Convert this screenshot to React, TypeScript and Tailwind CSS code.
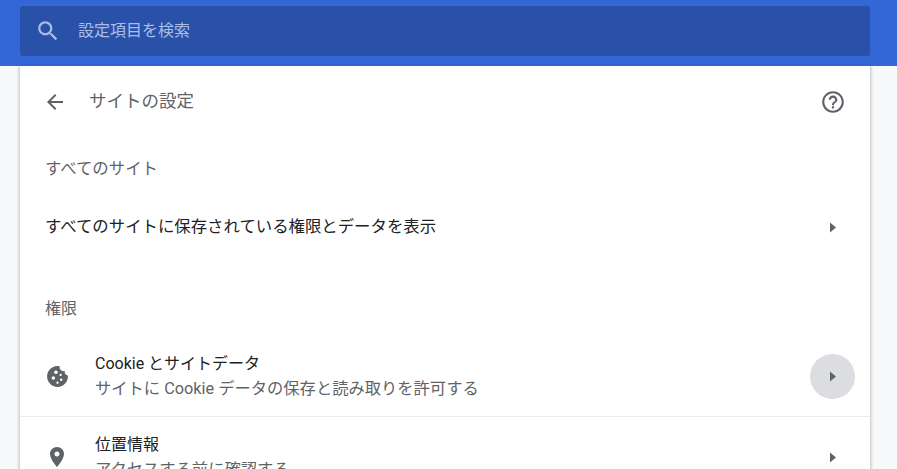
const FONT = "font-['Roboto','Noto_Sans_CJK_JP',sans-serif]";

function Caret() {
  return (
    <svg viewBox="0 0 6 10" className="w-[6px] h-[11px]" fill="#5f6368">
      <path d="M0 0 L6 5 L0 10 Z" />
    </svg>
  );
}

function SearchIcon() {
  return (
    <svg viewBox="0 0 24 24" className="w-[26px] h-[26px]" fill="#a9bde8">
      <path d="M15.5 14h-.79l-.28-.27C15.41 12.59 16 11.11 16 9.5 16 5.91 13.09 3 9.5 3S3 5.91 3 9.5 5.91 16 9.5 16c1.61 0 3.09-.59 4.23-1.57l.27.28v.79l5 4.99L20.49 19l-4.99-5zm-6 0C7.01 14 5 11.99 5 9.5S7.01 5 9.5 5 14 7.01 14 9.5 11.99 14 9.5 14z" />
    </svg>
  );
}

function BackIcon() {
  return (
    <svg viewBox="0 0 24 24" className="w-6 h-6" fill="#5f6368">
      <path d="M20 11H7.83l5.59-5.59L12 4l-8 8 8 8 1.41-1.41L7.83 13H20v-2z" />
    </svg>
  );
}

function HelpIcon() {
  return (
    <svg viewBox="0 0 24 24" className="w-[26px] h-[26px]" fill="#5f6368">
      <path d="M11 18h2v-2h-2v2zm1-16C6.48 2 2 6.48 2 12s4.48 10 10 10 10-4.48 10-10S17.52 2 12 2zm0 18c-4.41 0-8-3.59-8-8s3.59-8 8-8 8 3.59 8 8-3.59 8-8 8zm0-14c-2.21 0-4 1.79-4 4h2c0-1.1.9-2 2-2s2 .9 2 2c0 2-3 1.75-3 5h2c0-2.25 3-2.5 3-5 0-2.21-1.79-4-4-4z" />
    </svg>
  );
}

function CookieIcon() {
  return (
    <svg viewBox="0 0 24 24" className="w-[25px] h-[25px]" fill="#5f6368">
      <path d="M21.95 10.99c-1.79-.03-3.7-1.95-2.68-4.22-2.97 1-5.78-1.59-5.19-4.56C7.11.74 2 6.41 2 12c0 5.52 4.48 10 10 10 5.89 0 10.54-5.08 9.95-11.01z" />
      <circle cx="8" cy="13.5" r="1.7" fill="#fff" />
      <circle cx="10.5" cy="8" r="1.7" fill="#fff" />
      <circle cx="15.5" cy="15" r="1.2" fill="#fff" />
      <circle cx="12" cy="18" r="1.1" fill="#fff" />
      <circle cx="15" cy="10.5" r="1.1" fill="#fff" />
    </svg>
  );
}

function PinIcon() {
  return (
    <svg viewBox="0 0 24 24" className="w-6 h-6" fill="#5f6368">
      <path d="M12 2C8.13 2 5 5.13 5 9c0 5.25 7 13 7 13s7-7.75 7-13c0-3.87-3.13-7-7-7zm0 9.5c-1.38 0-2.5-1.12-2.5-2.5s1.12-2.5 2.5-2.5 2.5 1.12 2.5 2.5-1.12 2.5-2.5 2.5z" />
    </svg>
  );
}

export default function App() {
  return (
    <div className={`${FONT} w-[897px] h-[469px] overflow-hidden bg-[#f8f9fa] flex flex-col`}>
      <div className="h-[66px] shrink-0 bg-[#3367d6] pl-5 pr-[27px] pt-[6px]">
        <div className="h-[50px] rounded-[3px] bg-[#2a51a8] flex items-center pl-[15px]">
          <SearchIcon />
          <span className="ml-[17px] text-base text-[#a9bde8]">設定項目を検索</span>
        </div>
      </div>

      <div className="mx-5 w-[850px] bg-white shadow-[0_1px_3px_1px_rgba(60,64,67,0.3)] flex-1">
        <div className="h-[71px] flex items-center pl-[23px] pr-[24px]">
          <BackIcon />
          <span className="ml-[22px] text-[17.5px] text-[#5f6368]">サイトの設定</span>
          <span className="ml-auto flex"><HelpIcon /></span>
        </div>

        <div className="h-[64px] flex items-center pl-[25px] text-[16.4px] text-[#5f6368]">すべてのサイト</div>

        <div className="h-[52px] flex items-center pl-[25px] pr-[34px] text-[16.4px] text-[#202124]">
          すべてのサイトに保存されている権限とデータを表示
          <span className="ml-auto flex"><Caret /></span>
        </div>

        <div className="mt-[28px] h-[56px] flex items-center pl-[25px] text-base text-[#5f6368]">権限</div>

        <div className="h-[80px] flex items-center pl-[25px] pr-[15px] border-b border-[#e8eaed]">
          <CookieIcon />
          <div className="ml-[25px] leading-[25px]">
            <div className="text-base text-[#202124]">Cookie とサイトデータ</div>
            <div className="text-[16.3px] text-[#5f6368]">サイトに Cookie データの保存と読み取りを許可する</div>
          </div>
          <span className="ml-auto w-[45px] h-[45px] rounded-full bg-[#dcdde0] flex items-center justify-center"><Caret /></span>
        </div>

        <div className="h-[80px] flex items-center pl-[25px] pr-[34px]">
          <PinIcon />
          <div className="ml-[26px] leading-[25px]">
            <div className="text-base text-[#202124]">位置情報</div>
            <div className="text-[16.3px] text-[#5f6368]">アクセスする前に確認する</div>
          </div>
          <span className="ml-auto flex"><Caret /></span>
        </div>
      </div>
    </div>
  );
}
